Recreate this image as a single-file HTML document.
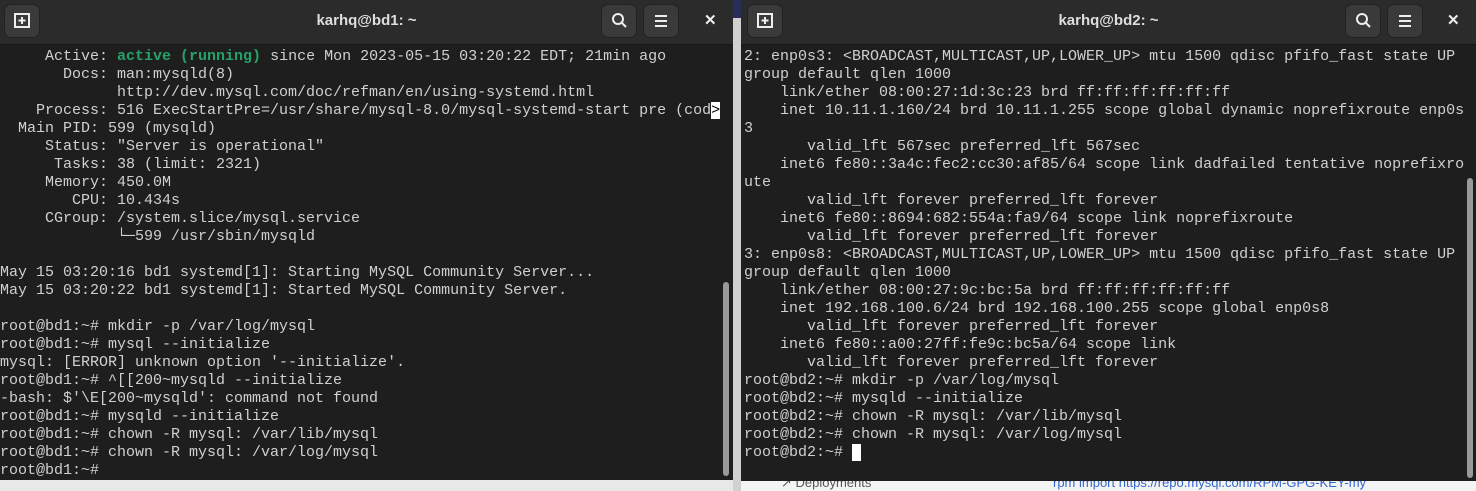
<!DOCTYPE html><html><head><style>
body{margin:0;width:1476px;height:491px;background:#e8e8e8;position:relative;overflow:hidden;font-family:"Liberation Mono",monospace}
.win{position:absolute;top:0;background:#1e1e1e;overflow:hidden}
.tb{position:absolute;left:0;right:0;top:0;height:44px;background:#2b2b2b;border-bottom:1px solid #161616}
.title{position:absolute;top:0;left:0;right:0;text-align:center;color:#dedede;font:bold 15px "Liberation Sans",sans-serif;line-height:42px}
.btn{position:absolute;top:5px;width:34px;height:32px;background:#3a3a3a;border-radius:6px;box-shadow:0 0 0 1px #222}
pre{position:absolute;top:48px;margin:0;font:15px/18px "Liberation Mono",monospace;color:#d0d0d0}
.g{color:#26a269;font-weight:bold}
.sb{position:absolute;width:6px;background:#9a9a9a;border-radius:3px}
.x{position:absolute;top:0;color:#eee;font:bold 15px "Liberation Sans",sans-serif;line-height:42px}
</style></head><body>
<div style="position:absolute;left:733px;top:0;width:8px;height:491px;background:#d0d0d0"></div>
<div style="position:absolute;left:733px;top:0;width:8px;height:18px;background:#2a2f5a"></div>
<div style="position:absolute;left:741px;top:481px;right:0;height:10px;background:#f4f4f4;font:13px 'Liberation Sans',sans-serif;color:#555"><span style="position:absolute;left:40px;top:-6px">↗ Deployments</span><span style="position:absolute;left:312px;top:-6px;color:#36c">rpm  import https://repo.mysql.com/RPM-GPG-KEY-my</span></div>
<div class="win" style="left:0;width:733px;height:480px">
<div class="tb">
<div class="btn" style="left:5px"><svg width="34" height="32"><rect x="10" y="9" width="14" height="13" fill="none" stroke="#eee" stroke-width="2"/><path d="M17 12v7M13.5 15.5h7" stroke="#eee" stroke-width="2"/></svg></div>
<div class="title">karhq@bd1: ~</div>
<div class="btn" style="left:602px"><svg width="34" height="32"><circle cx="16" cy="14" r="5" fill="none" stroke="#eee" stroke-width="2"/><path d="M20 18l4 4" stroke="#eee" stroke-width="2"/></svg></div>
<div class="btn" style="left:644px"><svg width="34" height="32"><path d="M11 11h12M11 16h12M11 21h12" stroke="#eee" stroke-width="2"/></svg></div>
<div class="x" style="left:704px">✕</div>
</div>
<pre style="left:0">     Active: <span class="g">active (running)</span> since Mon 2023-05-15 03:20:22 EDT; 21min ago
       Docs: man:mysqld(8)
             http://dev.mysql.com/doc/refman/en/using-systemd.html
    Process: 516 ExecStartPre=/usr/share/mysql-8.0/mysql-systemd-start pre (cod<span style="background:#fff;color:#000">&gt;</span>
  Main PID: 599 (mysqld)
     Status: "Server is operational"
      Tasks: 38 (limit: 2321)
     Memory: 450.0M
        CPU: 10.434s
     CGroup: /system.slice/mysql.service
             └─599 /usr/sbin/mysqld

May 15 03:20:16 bd1 systemd[1]: Starting MySQL Community Server...
May 15 03:20:22 bd1 systemd[1]: Started MySQL Community Server.

root@bd1:~# mkdir -p /var/log/mysql
root@bd1:~# mysql --initialize
mysql: [ERROR] unknown option '--initialize'.
root@bd1:~# ^[[200~mysqld --initialize
-bash: $'\E[200~mysqld': command not found
root@bd1:~# mysqld --initialize
root@bd1:~# chown -R mysql: /var/lib/mysql
root@bd1:~# chown -R mysql: /var/log/mysql
root@bd1:~# </pre>
<div class="sb" style="left:723px;top:282px;height:194px"></div>
</div>
<div class="win" style="left:741px;width:735px;height:481px">
<div class="tb">
<div class="btn" style="left:7px"><svg width="34" height="32"><rect x="10" y="9" width="14" height="13" fill="none" stroke="#eee" stroke-width="2"/><path d="M17 12v7M13.5 15.5h7" stroke="#eee" stroke-width="2"/></svg></div>
<div class="title">karhq@bd2: ~</div>
<div class="btn" style="left:605px"><svg width="34" height="32"><circle cx="16" cy="14" r="5" fill="none" stroke="#eee" stroke-width="2"/><path d="M20 18l4 4" stroke="#eee" stroke-width="2"/></svg></div>
<div class="btn" style="left:647px"><svg width="34" height="32"><path d="M11 11h12M11 16h12M11 21h12" stroke="#eee" stroke-width="2"/></svg></div>
<div class="x" style="left:706px">✕</div>
</div>
<pre style="left:3px">2: enp0s3: &lt;BROADCAST,MULTICAST,UP,LOWER_UP&gt; mtu 1500 qdisc pfifo_fast state UP
group default qlen 1000
    link/ether 08:00:27:1d:3c:23 brd ff:ff:ff:ff:ff:ff
    inet 10.11.1.160/24 brd 10.11.1.255 scope global dynamic noprefixroute enp0s
3
       valid_lft 567sec preferred_lft 567sec
    inet6 fe80::3a4c:fec2:cc30:af85/64 scope link dadfailed tentative noprefixro
ute
       valid_lft forever preferred_lft forever
    inet6 fe80::8694:682:554a:fa9/64 scope link noprefixroute
       valid_lft forever preferred_lft forever
3: enp0s8: &lt;BROADCAST,MULTICAST,UP,LOWER_UP&gt; mtu 1500 qdisc pfifo_fast state UP
group default qlen 1000
    link/ether 08:00:27:9c:bc:5a brd ff:ff:ff:ff:ff:ff
    inet 192.168.100.6/24 brd 192.168.100.255 scope global enp0s8
       valid_lft forever preferred_lft forever
    inet6 fe80::a00:27ff:fe9c:bc5a/64 scope link
       valid_lft forever preferred_lft forever
root@bd2:~# mkdir -p /var/log/mysql
root@bd2:~# mysqld --initialize
root@bd2:~# chown -R mysql: /var/lib/mysql
root@bd2:~# chown -R mysql: /var/log/mysql
root@bd2:~# <span style="background:#fff">&nbsp;</span></pre>
<div class="sb" style="left:726px;top:178px;height:300px"></div>
</div>
</body></html>
